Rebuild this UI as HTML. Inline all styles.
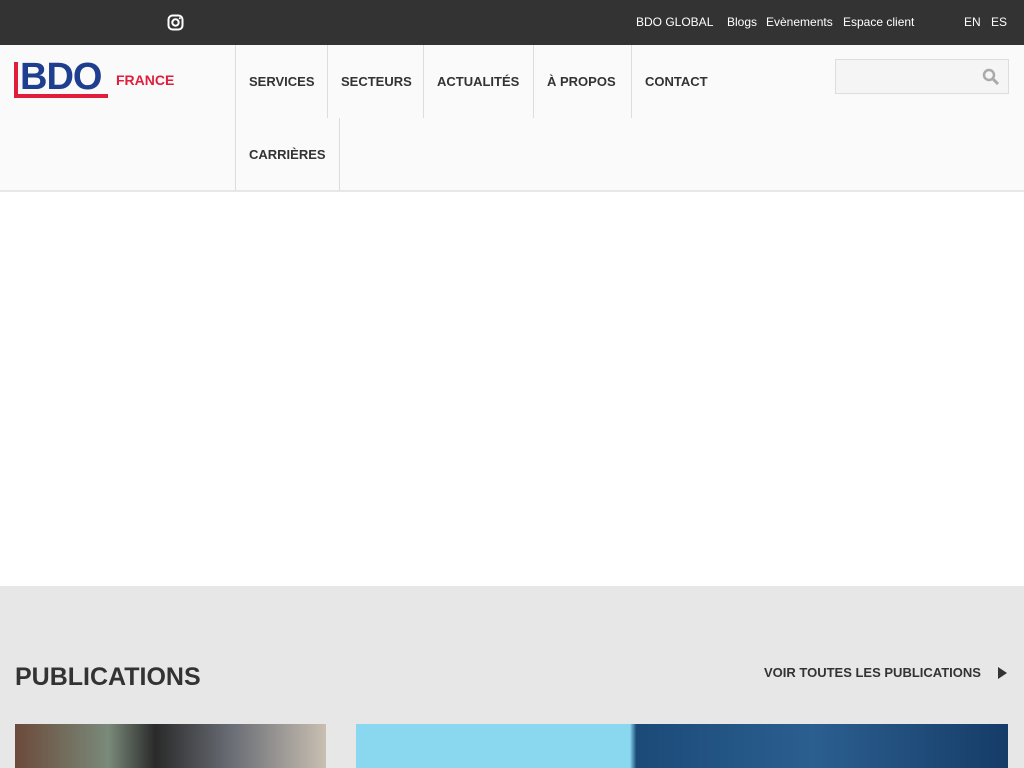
<!DOCTYPE html>
<html><head><meta charset="utf-8"><style>
*{margin:0;padding:0;box-sizing:border-box}
body{width:1024px;height:768px;overflow:hidden;background:#fff;font-family:"Liberation Sans",sans-serif;position:relative}
.top{position:absolute;left:0;top:0;width:1024px;height:45px;background:#333}
.top span{position:absolute;top:15px;color:#fff;font-size:12px}
.hdr{position:absolute;left:0;top:45px;width:1024px;height:147px;background:#fafafa;border-bottom:2px solid #e8e8e8}
.nav{position:absolute;font-size:13px;font-weight:bold;color:#333;border-left:1px solid #ddd;height:73px;line-height:73px;padding:0 13px}
.gray{position:absolute;left:0;top:586px;width:1024px;height:182px;background:#e7e7e7}
</style></head><body>
<div class="top">
<svg style="position:absolute;left:167px;top:14px" width="17" height="17" viewBox="0 0 17 17"><rect x="1.5" y="1.5" width="14" height="14" rx="4" fill="none" stroke="#fff" stroke-width="2"/><circle cx="8.5" cy="8.5" r="3.2" fill="none" stroke="#fff" stroke-width="2"/><circle cx="12.8" cy="4.2" r="1" fill="#fff"/></svg>
<span style="left:636px">BDO GLOBAL</span><span style="left:727px">Blogs</span><span style="left:766px">Evènements</span><span style="left:843px">Espace client</span><span style="left:964px">EN</span><span style="left:991px">ES</span>
</div>
<div class="hdr">
<div style="position:absolute;left:14px;top:17px;width:4px;height:36px;background:#e01e3c"></div>
<div style="position:absolute;left:20px;top:12px;font-size:38px;font-weight:bold;color:#1e3f8f;letter-spacing:-1px;line-height:40px">BDO</div>
<div style="position:absolute;left:14px;top:49px;width:94px;height:4px;background:#e01e3c"></div>
<div style="position:absolute;left:116px;top:27px;font-size:14px;font-weight:bold;color:#e01e3c">FRANCE</div>
<div class="nav" style="left:235px;top:0">SERVICES</div>
<div class="nav" style="left:327px;top:0">SECTEURS</div>
<div class="nav" style="left:423px;top:0">ACTUALITÉS</div>
<div class="nav" style="left:533px;top:0">À PROPOS</div>
<div class="nav" style="left:631px;top:0">CONTACT</div>
<div class="nav" style="left:235px;top:73px;border-right:1px solid #ddd">CARRIÈRES</div>
<div style="position:absolute;left:835px;top:14px;width:174px;height:35px;border:1px solid #ddd;background:#f5f5f5"></div>
<svg style="position:absolute;left:982px;top:23px" width="18" height="18" viewBox="0 0 18 18"><circle cx="7" cy="7" r="5" fill="none" stroke="#aaa" stroke-width="2.5"/><path d="M11 11l5 5" stroke="#aaa" stroke-width="3"/></svg>
</div>
<div class="gray">
<div style="position:absolute;left:15px;top:77px;font-size:25px;font-weight:bold;color:#333">PUBLICATIONS</div>
<div style="position:absolute;left:764px;top:79px;font-size:13px;font-weight:bold;color:#333">VOIR TOUTES LES PUBLICATIONS</div>
<div style="position:absolute;left:998px;top:81px;border-left:9px solid #333;border-top:6px solid transparent;border-bottom:6px solid transparent"></div>
<div style="position:absolute;left:15px;top:138px;width:311px;height:44px;background:linear-gradient(90deg,#6b4a3a,#7a8a7a 30%,#2a2a2a 45%,#6a6e76 70%,#c9bfb2)"></div>
<div style="position:absolute;left:356px;top:138px;width:652px;height:44px;background:linear-gradient(90deg,#8ad8f0 0,#8ad8f0 42%,#1b4a78 43%,#2b5f90 70%,#163c68)"></div>
</div>
</body></html>
